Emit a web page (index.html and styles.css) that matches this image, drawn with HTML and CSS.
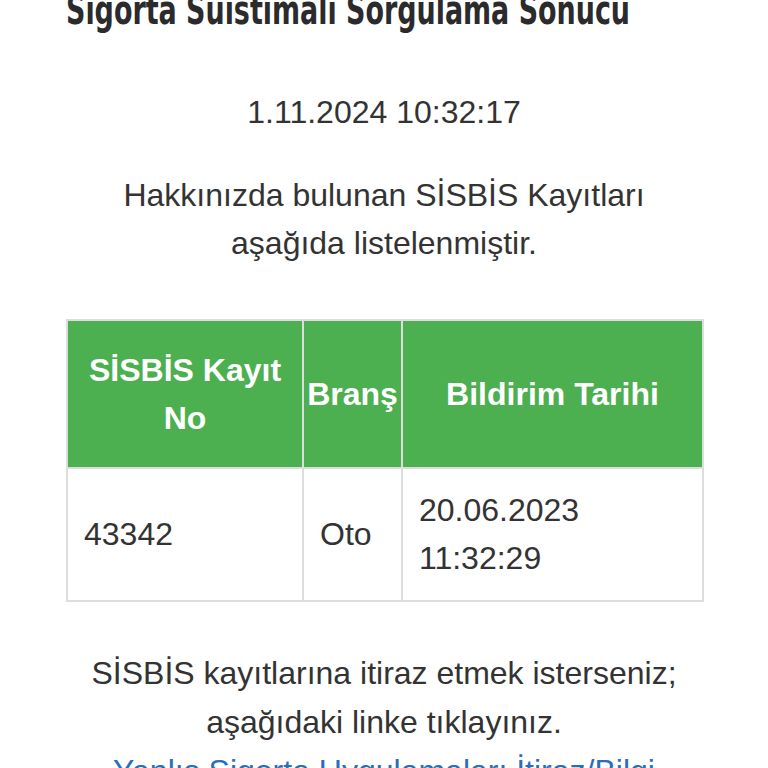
FILE: index.html
```html
<!DOCTYPE html>
<html lang="tr">
<head>
<meta charset="utf-8">
<title>Sigorta Suistimali Sorgulama Sonucu</title>
<link rel="stylesheet" href="styles.css">
</head>
<body>
<main class="page">
  <h1 class="title"><span class="title-text">Sigorta Suistimali Sorgulama Sonucu</span></h1>
  <p class="stamp">1.11.2024 10:32:17</p>
  <p class="intro">Hakkınızda bulunan SİSBİS Kayıtları aşağıda listelenmiştir.</p>
  <table class="records">
    <colgroup>
      <col class="c1">
      <col class="c2">
      <col class="c3">
    </colgroup>
    <thead>
      <tr>
        <th>SİSBİS Kayıt No</th>
        <th>Branş</th>
        <th>Bildirim Tarihi</th>
      </tr>
    </thead>
    <tbody>
      <tr>
        <td>43342</td>
        <td>Oto</td>
        <td>20.06.2023 11:32:29</td>
      </tr>
    </tbody>
  </table>
  <p class="outro">SİSBİS kayıtlarına itiraz etmek isterseniz; aşağıdaki linke tıklayınız.</p>
  <p class="link-line"><a class="link" href="#">Yanlış Sigorta Uygulamaları İtiraz/Bilgi</a></p>
</main>
</body>
</html>
```
FILE: styles.css
```css
html, body {
  margin: 0;
  padding: 0;
  background: #ffffff;
}
body {
  font-family: "Liberation Sans", Arial, sans-serif;
  font-size: 32px;
  line-height: 48px;
  color: #333333;
}
.page {
  padding: 0 66px;
}
.title {
  margin: -14px 0 0 0;
  font-family: "DejaVu Sans", sans-serif;
  font-stretch: condensed;
  font-weight: bold;
  font-size: 41px;
  line-height: 48px;
  color: #2b2b2d;
  white-space: nowrap;
}
.title-text {
  display: inline-block;
  transform: scaleX(0.73);
  transform-origin: left center;
}
.stamp {
  margin: 54px 0 0 0;
  text-align: center;
}
.intro {
  margin: 35px 0 0 0;
  text-align: center;
  padding: 0 40px;
}
.records {
  margin-top: 52px;
  width: 636px;
  table-layout: fixed;
  border-collapse: collapse;
}
.c1 { width: 236px; }
.c2 { width: 99px; }
.c3 { width: 301px; }
.records th {
  background: #4caf50;
  color: #ffffff;
  font-weight: bold;
  text-align: center;
  vertical-align: middle;
  padding: 25px 2px;
  border: 2px solid #dddddd;
}
.records th + th {
  border-left-color: #e6f2e6;
}
.records td {
  text-align: left;
  vertical-align: middle;
  padding: 17px 16px 18px;
  border: 2px solid #dddddd;
}
.outro {
  margin: 47px 0 0 0;
  text-align: center;
  line-height: 49px;
}
.link-line {
  margin: 0;
  text-align: center;
  line-height: 49px;
}
.link {
  color: #2a6ebb;
  text-decoration: none;
}
```
